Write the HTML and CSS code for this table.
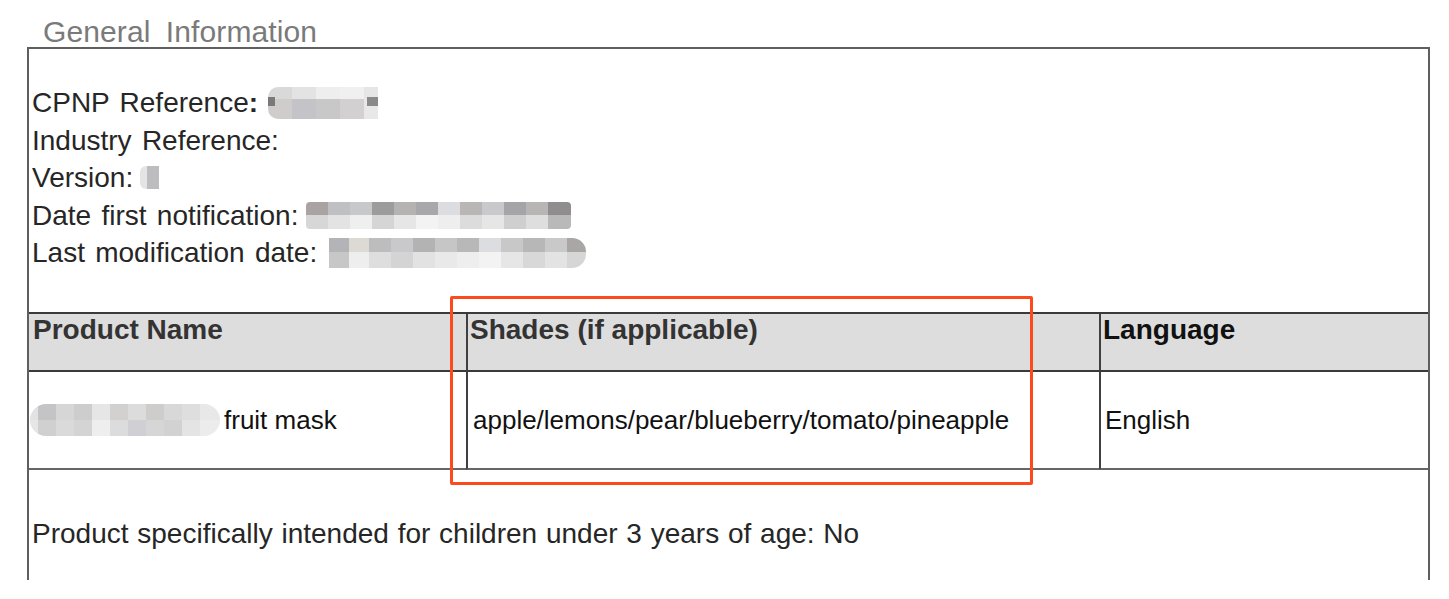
FILE: index.html
```html
<!DOCTYPE html>
<html lang="en">
<head>
<meta charset="utf-8">
<title>General Information</title>
<link rel="stylesheet" href="styles.css">
</head>
<body>
<div class="page">
  <h1 class="title">General Information</h1>
  <section class="panel">
    <div class="info">
      <div class="line">CPNP Reference<b class="colon">:</b><span class="blur b-cpnp"></span></div>
      <div class="line">Industry Reference:</div>
      <div class="line">Version:<span class="blur b-ver"></span></div>
      <div class="line">Date first notification:<span class="blur b-date"></span></div>
      <div class="line">Last modification date:<span class="blur b-mod"></span></div>
    </div>
    <div class="grid">
      <div class="cell head c1">Product Name</div>
      <div class="cell head c2">Shades (if applicable)</div>
      <div class="cell head c3 dark">Language</div>
      <div class="cell body c1"><span class="blur b-prod"></span>fruit mask</div>
      <div class="cell body c2">apple/lemons/pear/blueberry/tomato/pineapple</div>
      <div class="cell body c3">English</div>
    </div>
    <p class="note">Product specifically intended for children under 3 years of age: No</p>
  </section>
  <div class="highlight"></div>
</div>
</body>
</html>
```

FILE: styles.css
```css
* { box-sizing: border-box; }
html, body { margin: 0; padding: 0; background: #ffffff; }
body {
  font-family: "Liberation Sans", Arial, sans-serif;
  color: #262626;
  overflow: hidden;
}
.page {
  position: relative;
  padding-top: 17px;
  height: 599px;
  overflow: hidden;
}
.title {
  margin: 0 0 0 43px;
  font-size: 30px;
  line-height: 30px;
  font-weight: normal;
  color: #7a7a7a;
  word-spacing: 7px;
  letter-spacing: 0.1px;
}
.panel {
  margin-left: 27px;
  width: 1403px;
  height: 533px;
  border: 2px solid #5f5f5f;
  border-bottom: none;
}
.info {
  padding: 35px 0 40.5px 3px;
}
.line {
  display: flex;
  align-items: center;
  font-size: 28px;
  line-height: 37.5px;
  height: 37.5px;
  word-spacing: 2.5px;
  white-space: pre;
}
.colon { font-weight: bold; }
.blur {
  display: inline-block;
  flex: none;
  filter: blur(0.6px);
}
.b-cpnp {
  margin-left: 10px;
  width: 110px;
  height: 32px;
  border-radius: 10px 0 0 10px;
  background:
    linear-gradient(90deg, #7a7a7a 0 7px, transparent 7px 99px, #8a8a8a 99px 110px) 0 10px / 110px 9px no-repeat,
    linear-gradient(90deg, #d9d9d9 0 24px, #e3e3e3 24px 48px, #eeeeee 48px 72px, #f0f0f0 72px 96px, #e6e6e6 96px 110px) 0 0 / 110px 12px no-repeat,
    linear-gradient(90deg, #d0cccc 0 24px, #c4c4c8 24px 48px, #c8c8c8 48px 72px, #d2d0d0 72px 96px, #e8e8e8 96px 110px) 0 12px / 110px 20px no-repeat;
}
.b-ver {
  margin-left: 7px;
  width: 19px;
  height: 23px;
  border-radius: 6px 0 0 6px;
  background: linear-gradient(90deg, #e4e4e4 0 7px, #bdbdc0 7px 19px);
}
.b-date {
  margin-left: 8px;
  width: 265px;
  height: 27px;
  border-radius: 4px;
  background:
    linear-gradient(90deg, #a9a4a2 0 22px, #bfc0c2 22px 44px, #c6c8cb 44px 66px, #9c9c9c 66px 88px, #b5b3b2 88px 110px, #a8a8aa 110px 132px, #dcdde0 132px 154px, #b9b6b5 154px 176px, #c9c9cc 176px 198px, #a5a5a7 198px 220px, #b7b6b5 220px 242px, #8f8d8d 242px 265px) 0 0 / 265px 13px no-repeat,
    linear-gradient(90deg, #d7d7d7 0 22px, #e3e3e3 22px 44px, #efefef 44px 66px, #d5d5d5 66px 88px, #e6e6e6 88px 110px, #f3f3f3 110px 132px, #eeeeee 132px 154px, #dcdcdc 154px 176px, #e6e6e6 176px 198px, #cfcfcf 198px 220px, #dedede 220px 242px, #b9b9b9 242px 265px) 0 13px / 265px 14px no-repeat;
}
.b-mod {
  margin-left: 12px;
  width: 257px;
  height: 30px;
  border-radius: 0 14px 14px 0;
  background:
    linear-gradient(90deg, #b4b4b8 0 20px, #ddd9d4 20px 40px, #bdbdbd 40px 62px, #c9c9cb 62px 84px, #b3b3b3 84px 106px, #c6c6c6 106px 128px, #b8b8b8 128px 150px, #dcdde0 150px 172px, #c8c8c8 172px 194px, #b7b7b7 194px 216px, #c9c9c9 216px 238px, #aaa6a6 238px 257px) 0 0 / 257px 14px no-repeat,
    linear-gradient(90deg, #c7c7c7 0 20px, #eeeeee 20px 40px, #dedede 40px 62px, #d4d4d4 62px 84px, #e2e2e2 84px 106px, #e9e9e9 106px 128px, #eeeeee 128px 150px, #f3f3f3 150px 172px, #e6e6e6 172px 194px, #d8d8d8 194px 216px, #e3e3e3 216px 238px, #d6d6d6 238px 257px) 0 14px / 257px 16px no-repeat;
}
.b-prod {
  margin-right: 4px;
  width: 190px;
  height: 32px;
  border-radius: 16px;
  background:
    linear-gradient(90deg, #e2e2e2 0 8px, #c4c4c6 8px 26px, #d6d6d6 26px 44px, #cdcdcd 44px 62px, #e6e6e6 62px 80px, #d3d1d0 80px 98px, #dcdcdc 98px 116px, #cfcdcb 116px 134px, #d8d8d8 134px 152px, #dedede 152px 170px, #e8e8e8 170px 190px) 0 0 / 190px 16px no-repeat,
    linear-gradient(90deg, #e6e6e6 0 8px, #d0d0d0 8px 26px, #dadada 26px 44px, #d4d4d4 44px 62px, #eeeeee 62px 80px, #dcdcdc 80px 98px, #d0d0d4 98px 116px, #d6d6d6 116px 134px, #d2d2d2 134px 152px, #e4e4e4 152px 170px, #ececec 170px 190px) 0 16px / 190px 16px no-repeat;
}
.grid {
  display: grid;
  grid-template-columns: 437px 633px 329px;
  grid-template-rows: 58px 98px;
  border-top: 2px solid #3a3a3a;
}
.cell {
  display: flex;
}
.cell.c2, .cell.c3 { border-left: 2px solid #404040; }
.head {
  background: #dddddd;
  border-bottom: 2px solid #3a3a3a;
  align-items: flex-start;
  font-size: 28px;
  font-weight: bold;
  line-height: 32px;
  color: #333333;
}
.head.c1 { padding-left: 4px; }
.head.c2 { padding-left: 2px; }
.head.c3 { padding-left: 2px; }
.head.dark { color: #111111; }
.body {
  align-items: center;
  border-bottom: 2px solid #666666;
  font-size: 26px;
  line-height: 30px;
  color: #111111;
  white-space: pre;
}
.body.c1 { padding-left: 1px; }
.body.c2 { padding-left: 5px; }
.body.c3 { padding-left: 4px; }
.note {
  margin: 44.5px 0 0 3px;
  font-size: 28px;
  line-height: 37.5px;
  word-spacing: 1px;
  color: #262626;
}
.highlight {
  position: absolute;
  left: 450px;
  top: 296px;
  width: 583px;
  height: 189px;
  border: 3px solid #fa4a1e;
  border-radius: 2px;
}
```
